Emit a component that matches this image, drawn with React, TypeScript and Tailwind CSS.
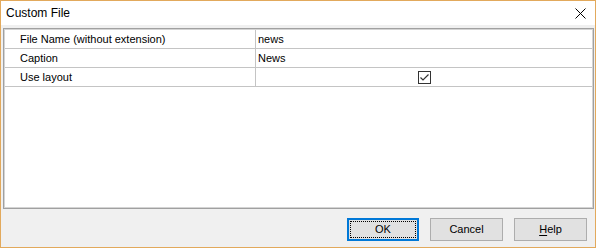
import { useState } from 'react';

const rows = [
    { label: 'File Name (without extension)', value: 'news' },
    { label: 'Caption', value: 'News' },
    { label: 'Use layout', value: null },
];

export default function App() {
    const [useLayout, setUseLayout] = useState(true);

    return (
        <div className="w-[596px] h-[248px] border border-[#e2a95c] bg-[#f0f0f0] flex flex-col font-['Liberation_Sans',sans-serif] text-black overflow-hidden">
            {/* Title bar */}
            <div className="h-[24px] bg-white flex items-center justify-between pl-[5px] pr-[9px] shrink-0">
                <span className="text-[12px]">Custom File</span>
                <svg width="11" height="11" viewBox="0 0 11 11" className="block">
                    <path d="M0.5 0.5 L10.5 10.5 M10.5 0.5 L0.5 10.5" stroke="#000" strokeWidth="1" />
                </svg>
            </div>

            {/* Body */}
            <div className="flex-1 flex flex-col pl-[2px] pr-[1px] pt-[3px]">
                {/* Property grid */}
                <div className="h-[181px] w-[591px] border border-[#a0a0a0] bg-white">
                    <div className="h-full w-full border border-[#d4d4d4]">
                        {rows.map((row, idx) => (
                            <div key={idx} className="flex h-[19px] border-b border-[#c4c4c4] text-[11px] leading-[18px]">
                                <div className="w-[251px] border-r border-[#c4c4c4] pl-[15px] truncate">{row.label}</div>
                                <div className="flex-1 pl-[2px] flex items-center">
                                    {row.value !== null ? (
                                        <span>{row.value}</span>
                                    ) : (
                                        <div className="flex-1 flex justify-center">
                                            <button
                                                onClick={() => setUseLayout(!useLayout)}
                                                className="w-[13px] h-[13px] border border-[#333333] bg-white flex items-center justify-center ml-[-2px]"
                                            >
                                                {useLayout && (
                                                    <svg width="9" height="7" viewBox="0 0 9 7">
                                                        <path d="M0.5 3.5 L3 6 L8.5 0.5" stroke="#333" strokeWidth="1.2" fill="none" />
                                                    </svg>
                                                )}
                                            </button>
                                        </div>
                                    )}
                                </div>
                            </div>
                        ))}
                    </div>
                </div>

                {/* Footer buttons */}
                <div className="flex justify-end gap-[11px] pt-[9px] pr-[7px]">
                    <button className="w-[72px] h-[23px] border-2 border-[#0078d7] bg-[#e1e1e1] p-[1px] text-[11px]">
                        <div className="h-full w-full border border-dotted border-black flex items-center justify-center">OK</div>
                    </button>
                    <button className="w-[73px] h-[23px] border border-[#adadad] bg-[#e1e1e1] text-[11px]">Cancel</button>
                    <button className="w-[73px] h-[23px] border border-[#adadad] bg-[#e1e1e1] text-[11px]">
                        <span className="underline underline-offset-2">H</span>elp
                    </button>
                </div>
            </div>
        </div>
    );
}
